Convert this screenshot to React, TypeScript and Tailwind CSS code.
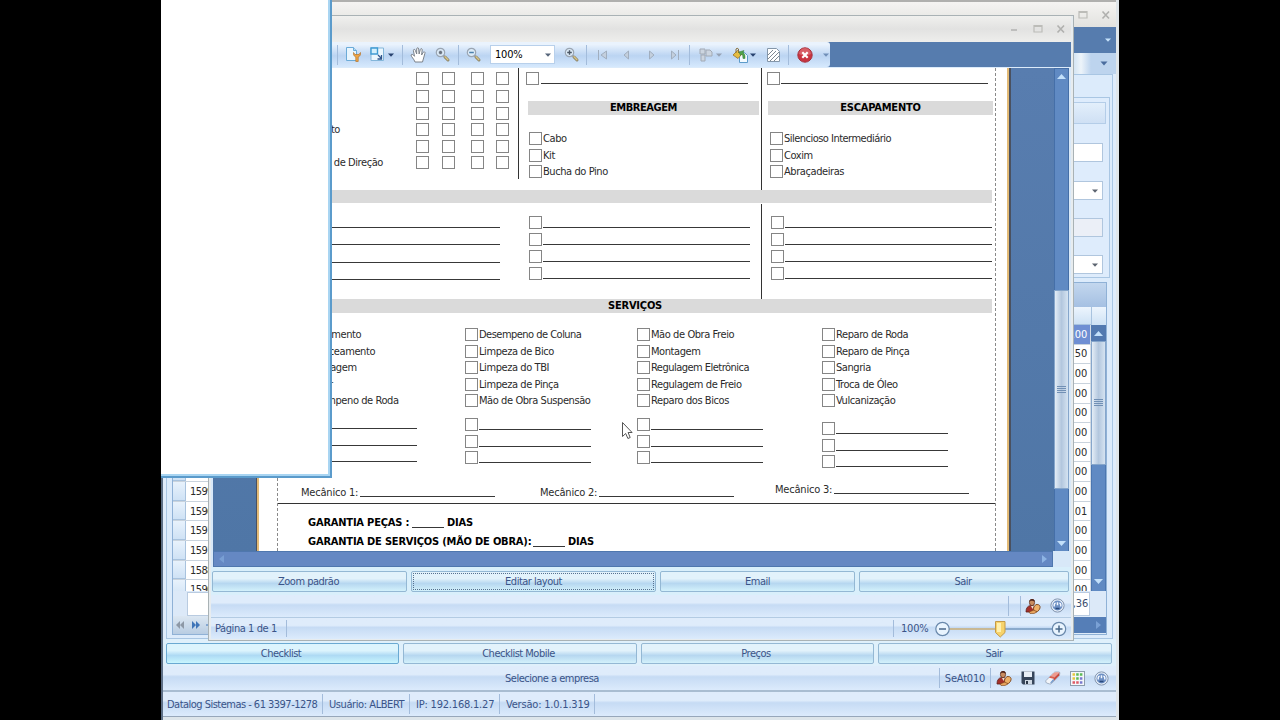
import React from "react";

const Box = ({ className = "" }: { className?: string }) => (
  <span className={`block h-[13px] w-[13px] shrink-0 border border-[#858585] bg-white ${className}`} />
);

const Line = ({ className = "" }: { className?: string }) => (
  <span className={`block h-px shrink-0 bg-[#383838] ${className}`} />
);

const Item = ({ label, className = "" }: { label: string; className?: string }) => (
  <div className={`flex h-[13px] items-center whitespace-nowrap ${className}`}>
    <Box />
    <span className={`pl-px ${label.length > 18 && !label.startsWith("Mão") ? "tracking-[-0.52px]" : "tracking-[-0.42px]"}`}>{label}</span>
  </div>
);

const Blank = ({ className = "", line = "w-[112px]", gap = "gap-px" }: { className?: string; line?: string; gap?: string }) => (
  <div className={`flex h-[13px] items-end ${gap} ${className}`}>
    <Box />
    <Line className={`${line} mb-px`} />
  </div>
);

const Caret = ({ className = "fill-[#2f4f80]" }: { className?: string }) => (
  <svg width="6" height="4" viewBox="0 0 6 4" className={`shrink-0 ${className}`}><path d="M0 .5h6L3 3.8z" /></svg>
);

const PersonIcon = () => (
  <svg width="16" height="16" viewBox="0 0 16 16" className="shrink-0">
    <path d="M1 14c0-4 1.500-6 4.500-6.500L9 8l2 6z" fill="#a5302a" stroke="#5e201b" strokeWidth=".8" />
    <ellipse cx="7" cy="4.500" rx="2.600" ry="3.200" fill="#c98c5f" stroke="#54281a" strokeWidth=".7" />
    <path d="M4.300 4C4 .5 10-.5 9.800 4 8.500 2 6 3 5.500 2.500z" fill="#4d2218" />
    <path d="M6 8l1.500 3L9 8z" fill="#eee0d2" />
    <ellipse cx="11.800" cy="10" rx="3" ry="3.700" transform="rotate(25 11.800 10)" fill="#edb067" stroke="#7c431a" strokeWidth=".8" />
    <path d="M4 14l5-2 3 2-3 1.500H5z" fill="#e6a35e" stroke="#7c431a" strokeWidth=".6" />
  </svg>
);

const HelpIcon = () => (
  <svg width="15" height="15" viewBox="0 0 15 15" className="shrink-0">
    <circle cx="7.500" cy="7.500" r="6.600" fill="#e9f1fa" stroke="#8193ad" />
    <circle cx="7.500" cy="7.500" r="5" fill="#6d8fc3" />
    <path d="M4.200 8.500V6.800q0-1.500 1.500-1.500M10.800 8.500V6.800q0-1.500-1.500-1.500M7.500 4.200v3" stroke="#f4f8ff" strokeWidth="1.500" fill="none" />
    <path d="M5.500 10.500h4" stroke="#294a7d" strokeWidth="1.500" />
  </svg>
);

const Magnifier = ({ sign }: { sign: "plus" | "minus" | "dot" }) => (
  <svg width="16" height="16" viewBox="0 0 16 16" className="shrink-0">
    <path d="M8.500 8.500l2 2" stroke="#7e8793" strokeWidth="1.500" />
    <path d="M10 10l3 3" stroke="#8c8468" strokeWidth="3" strokeLinecap="round" />
    <path d="M10 9.800l2.900 2.900" stroke="#d6c487" strokeWidth="1.400" strokeLinecap="round" />
    <circle cx="5.500" cy="5.500" r="4.200" fill="#dcebf8" stroke="#9aa5b2" strokeWidth="1.200" />
    {sign === "plus" && <path d="M5.500 3.200v4.600M3.200 5.500h4.600" stroke="#4b5765" strokeWidth="1.400" />}
    {sign === "minus" && <path d="M3.200 5.500h4.600" stroke="#4b80ad" strokeWidth="1.500" />}
    {sign === "dot" && <path d="M5.500 3.800v3.400M3.800 5.500h3.400" stroke="#69727e" strokeWidth="2" />}
  </svg>
);

const WindowButtons = ({ className = "" }: { className?: string }) => (
  <svg width="56" height="10" viewBox="0 0 56 10" className={className}>
    <path d="M1 6h6" stroke="#b2b2b0" strokeWidth="1.500" />
    <path d="M24 1.500h8v6.500h-8zM24 2.500h8" stroke="#bcbcb8" strokeWidth="1.200" fill="none" />
    <path d="M47.500 1.500l6.500 7M54 1.500l-6.500 7" stroke="#b0b0ae" strokeWidth="1.600" />
  </svg>
);

const Sep = ({ className = "h-[20px]" }: { className?: string }) => (
  <span className={`block w-px shrink-0 bg-[#a3bcdb] ${className}`} />
);

const Btn = ({ label, className = "", focus = false, hot = false }: { label: string; className?: string; focus?: boolean; hot?: boolean }) => (
  <button
    className={`flex h-[21px] shrink-0 items-center justify-center rounded-[2px] border bg-linear-to-b tracking-[-0.5px] text-[#3a5488] ${
      hot
        ? "border-[#6aa9d2] from-[#dcf4fd] from-35% via-[#aedaf4] via-60% to-[#c8f6fe]"
        : "border-[#94b8d4] from-[#e2f2fb] from-35% via-[#b6d7f0] via-60% to-[#d3f1fb]"
    } ${className}`}
  >
    {focus ? (
      <span className="mx-px flex h-[17px] w-full items-center justify-center border border-dotted border-[#56708f]">{label}</span>
    ) : (
      label
    )}
  </button>
);

const BAR = "bg-linear-to-b from-[#dfecfb] from-35% via-[#c6dbf4] via-45% to-[#dcebfc]";

const Grip = () => (
  <svg width="9" height="8" viewBox="0 0 9 8"><path d="M0 .5h9M0 2.500h9M0 4.500h9M0 6.500h9" stroke="#7190b5" /></svg>
);

const Up = () => <svg width="9" height="5" viewBox="0 0 9 5"><path d="M0 5l4.500-5L9 5z" fill="#c3e0fa" /></svg>;
const Down = () => <svg width="9" height="5" viewBox="0 0 9 5"><path d="M0 0h9L4.500 5z" fill="#c3e0fa" /></svg>;

const gridRows = [
  ["1612", ".00"], ["1611", ".50"], ["1610", ".00"], ["1607", ".00"], ["1605", ".00"], ["1604", ".00"], ["1602", ".00"],
  ["1600", ".00"], ["1599", ".00"], ["1596", ".01"], ["1591", ".00"], ["1591", ".00"], ["1588", ".00"], ["1590", ".00"],
];

function Field({ className = "", arrow = false, off = false }: { className?: string; arrow?: boolean; off?: boolean }) {
  return (
    <div className={`flex h-[19px] w-[180px] shrink-0 items-center justify-end self-end border border-[#b0c6de] pr-[4px] ${off ? "bg-[#ebeff7]" : "bg-white"} ${className}`}>
      {arrow && <Caret className="fill-[#5c6470]" />}
    </div>
  );
}

function AppWindow() {
  return (
    <div className="flex h-full flex-col border-r-[3px] border-l-2 border-r-[#dfe5e9] border-l-[#5d6f86] bg-[#dfecfb]">
      <header className="flex h-[27px] shrink-0 items-center justify-end border-t-2 border-[#b0b0ae] bg-linear-to-b from-[#f5f4f2] to-[#e2e2df] pr-[5px]">
        <WindowButtons />
      </header>
      <div className="flex h-[26px] shrink-0 items-center justify-end bg-[#567cae] pr-[5px]"><Caret className="fill-[#c7e3fb]" /></div>
      <div className="flex h-[21px] shrink-0 justify-end bg-[#bcd3ed]">
        <div className="w-[20px] bg-linear-to-r from-[#cadef0] via-[#edf4fa] to-[#bdd4ee]" />
        <div className="flex w-[25px] items-center justify-center bg-[#bdd4ee]">
          <svg width="8" height="5" viewBox="0 0 8 5"><path d="M.5.5h7L4 4.500z" fill="#4a6c9e" /></svg>
        </div>
      </div>
      <main className="mr-[3px] ml-[3px] flex h-[565px] shrink-0 flex-col border border-[#a9c6e3] bg-[#dcebfb] px-[5px] pt-[22px]">
        <section className="-mr-[3px] flex h-[181px] shrink-0 flex-col border border-[#a9c6e3] bg-[#deecfc] p-[4px] pr-[6px]">
          <div className="-mr-[3px] h-[22px] shrink-0 border border-[#b4cde8] bg-linear-to-b from-[#e3effb] to-[#cfe0f4]" />
          <Field className="mt-[19px]" />
          <Field className="mt-[19px]" arrow />
          <Field className="mt-[18px]" off />
          <Field className="mt-[18px]" arrow />
        </section>
        <section className="mt-[4px] flex h-[353px] shrink-0 flex-col border border-[#8fb1d6] bg-[#dce9f8]">
          <div className="h-[24px] shrink-0 bg-linear-to-b from-[#c3d7ee] to-[#a5c0e2]" />
          <div className="flex h-[284px] shrink-0">
            <div className="flex min-w-0 flex-1 flex-col overflow-hidden">
              <div className="h-[18px] shrink-0 border-b border-[#a8c3df] bg-linear-to-b from-[#edf5fd] to-[#cee2f5]" />
              {gridRows.map(([id, value], i) => (
                <div key={i} className="flex h-[19.65px] shrink-0 border-b border-[#c9d3dd] bg-white">
                  <span className="w-[13px] border-r border-b border-[#a9c3de] bg-linear-to-b from-[#e8f2fc] to-[#cfe2f5]" />
                  <span className="flex flex-1 items-center pl-[4px] tracking-[-0.6px]">{id}</span>
                  <span className={`flex w-[50px] items-center justify-end border-r border-[#d4dde6] pr-[3px] ${i === 0 ? "bg-[#6f8fd3] text-white" : ""}`}>{value}</span>
                </div>
              ))}
            </div>
            <div className="flex w-[15px] shrink-0 flex-col bg-[#608ac3]">
              <div className="h-[18px] shrink-0 border-l border-[#a8c3df] bg-linear-to-b from-[#edf5fd] to-[#cee2f5]" />
              <div className="flex h-[16px] items-center justify-center bg-[#5279b0]"><Up /></div>
              <div className="flex h-[124px] items-center justify-center border border-[#86a6cb] bg-linear-to-r from-[#e4edf6] via-[#b3c7de] to-[#d5e3f1]"><Grip /></div>
              <div className="flex flex-1 items-end justify-center border-x border-[#4c77b1] pb-[7px]"><Down /></div>
            </div>
          </div>
          <div className="flex h-[25px] shrink-0 items-center justify-end pr-[16px] pl-[14px]">
            <span className="flex h-[24px] w-full items-center justify-end border border-[#b9cbe0] bg-white pr-px text-[#394c6d]">,36</span>
          </div>
          <div className="flex flex-1 items-center bg-[#deebf9]">
            <div className="flex h-full w-[200px] items-center gap-[5px] bg-linear-to-b from-[#dce7f2] to-[#b8cce2] pl-[3px]">
              <svg width="34" height="8" viewBox="0 0 34 8">
                <path d="M4 0v8L0 4zM8 0v8L4 4z" fill="#8d98a6" />
                <path d="M16 0v8l4-4zM20 0v8l4-4z" fill="#3f75b8" />
                <path d="M30 4h4" stroke="#3f75b8" />
              </svg>
            </div>
            <div className="flex h-[16px] flex-1 items-center justify-end bg-[#557eb7] pr-[5px]">
              <svg width="5" height="8" viewBox="0 0 5 8"><path d="M0 0l5 4-5 4z" fill="#7aa1d5" /></svg>
            </div>
          </div>
        </section>
      </main>
      <div className="flex h-[27px] shrink-0 gap-[4px] bg-[#dff0fb] pt-[4px] pl-[3px]">
        <Btn label="Checklist" hot className="w-[233px] pr-[3px]" />
        <Btn label="Checklist Mobile" className="w-[234px] pr-[3px]" />
        <Btn label="Preços" className="w-[233px] pr-[3px]" />
        <Btn label="Sair" className="w-[234px] pr-[2px]" />
      </div>
      <div className={`flex h-[26px] shrink-0 items-center border-b-2 border-[#a9bdd1] text-[#3a5488] ${BAR}`}>
        <span className="w-[776px] pl-[2px] text-center tracking-[-0.5px]">Selecione a empresa</span>
        <Sep />
        <span className="w-[50px] text-center">SeAt010</span>
        <Sep />
        <div className="flex flex-1 items-center justify-between pr-[7px] pl-[5px]">
          <PersonIcon />
          <svg width="14" height="14" viewBox="0 0 14 14">
            <path d="M.5.5h13v13H2l-1.500-1.500z" fill="#36455a" />
            <path d="M3 .5h8V6H3z" fill="#e8eff7" /><path d="M4 9h7v4.500H4z" fill="#cfd9e4" /><path d="M5 10h2v3H5z" fill="#2a3748" />
          </svg>
          <svg width="16" height="14" viewBox="0 0 16 14">
            <path d="M1 9.500L8.500 2q1-1 2-1h3.500q1 0 .8 1.200l-.4 2.600-7.900 7.700q-.8.700-1.700.5L1.500 12q-1.200-1-.5-2.500z" fill="#f2f5fa" stroke="#8a99ad" strokeWidth=".7" />
            <path d="M5.800 4.700L8.800 2q1-.8 2-.7h3.400l-4 4.400z" fill="#ee9b8e" />
            <path d="M14.400 1.500l-.3 3.100-5 5-.7-2z" fill="#c8473b" />
            <path d="M5.500 5l4.700.7-1.500 2-4.700-1z" fill="#d9604f" />
            <path d="M8.400 7.800l.7 1.800-2.900 2.700q-.7.500-.9-.8z" fill="#6f97cb" />
          </svg>
          <svg width="15" height="15" viewBox="0 0 15 15">
            <rect x=".5" y=".5" width="14" height="14" fill="#f4f7fa" stroke="#8d9cac" />
            <path d="M2.500 3.500h2.500M2.500 7.500h2.500" stroke="#e6c83e" strokeWidth="2.500" />
            <path d="M6.200 3.500h2.500M6.200 7.500h2.500M9.900 3.500h2.500" stroke="#5bbb56" strokeWidth="2.500" />
            <path d="M9.900 7.500h2.500M9.900 11.500h2.500" stroke="#7a79cf" strokeWidth="2.500" />
            <path d="M2.500 11.500h2.500M6.200 11.500h2.500" stroke="#dd5b67" strokeWidth="2.500" />
          </svg>
          <HelpIcon />
        </div>
      </div>
      <footer className={`flex h-[25px] shrink-0 items-center border-b border-[#97a7ba] text-[#3a5488] ${BAR}`}>
        <span className="w-[159px] pl-[4px] tracking-[-0.52px] whitespace-nowrap">Datalog Sistemas - 61 3397-1278</span>
        <Sep />
        <span className="w-[86px] pl-[6px] tracking-[-0.42px] whitespace-nowrap">Usuário: ALBERT</span>
        <Sep />
        <span className="w-[89px] pl-[6px] whitespace-nowrap">IP: 192.168.1.27</span>
        <Sep />
        <span className="w-[94px] pl-[6px] whitespace-nowrap">Versão: 1.0.1.319</span>
        <Sep />
      </footer>
      <div className="flex-1 bg-[#dde5ea]" />
    </div>
  );
}

const checkRows = ["mt-[4px]", "mt-[5px]", "mt-[4px]", "mt-[3px]", "mt-[4px]", "mt-[3px]"];

const serviceColumns = [
  { pad: "w-[172px]", items: ["Desempeno de Coluna", "Limpeza de Bico", "Limpeza do TBI", "Limpeza de Pinça", "Mão de Obra Suspensão"], blank: "mt-[11px]" },
  { pad: "w-[185px]", items: ["Mão de Obra Freio", "Montagem", "Regulagem Eletrônica", "Regulagem de Freio", "Reparo dos Bicos"], blank: "mt-[11px]" },
  { pad: "w-[140px]", items: ["Reparo de Roda", "Reparo de Pinça", "Sangria", "Troca de Óleo", "Vulcanização"], blank: "mt-[15px]" },
];

const FourBlanks = () => (
  <>
    <Blank className="mt-[12px]" line="w-[207px]" />
    <Blank className="mt-[4px]" line="w-[207px]" />
    <Blank className="mt-[4px]" line="w-[207px]" />
    <Blank className="mt-[4px]" line="w-[207px]" />
  </>
);

function Report() {
  return (
    <div className="flex h-full w-[755px] shrink-0 border-r-2 border-l border-r-[#4a5160] border-l-[#4a5160]">
      <div className="flex w-full border-x-2 border-[#e3bb77] bg-white pr-[11px] pl-[18px]">
        <div className="flex w-full flex-col border-x border-dashed border-[#8a8a8a] text-[#2b2b2b]">
          <div className="flex h-[122px] shrink-0">
            <div className="flex w-[240px] shrink-0">
              <div className="flex w-[138px] flex-col pt-[55px] text-right tracking-[-0.42px] whitespace-nowrap">
                <span className="pr-[76px] leading-[14px]">Alinhamento</span>
                <span className="mt-[19px] pr-[33px] leading-[14px]">Caixa de Direção</span>
              </div>
              <div className="flex flex-col">
                {checkRows.map((m, i) => (
                  <div key={i} className={`flex ${m}`}>
                    <Box /><Box className="ml-[13px]" /><Box className="ml-[16px]" /><Box className="ml-[12px]" />
                  </div>
                ))}
              </div>
            </div>
            <div className="h-[111px] w-px shrink-0 bg-[#333]" />
            <div className="flex w-[242px] shrink-0 flex-col pl-[7px]">
              <Blank className="mt-[4px]" line="w-[207px]" gap="gap-[2px]" />
              <h3 className="mt-[16px] ml-[2px] flex h-[14px] w-[231px] items-center justify-center bg-[#dadada] pb-[2px] font-bold tracking-[-0.45px] text-black">EMBREAGEM</h3>
              <Item label="Cabo" className="mt-[17px] ml-[3px]" />
              <Item label="Kit" className="mt-[4px] ml-[3px]" />
              <Item label="Bucha do Pino" className="mt-[3px] ml-[3px]" />
            </div>
            <div className="w-px shrink-0 bg-[#333]" />
            <div className="flex flex-1 flex-col pl-[5px]">
              <Blank className="mt-[4px]" line="w-[207px]" gap="gap-px" />
              <h3 className="mt-[16px] ml-px flex h-[14px] w-[225px] items-center justify-center bg-[#dadada] pb-[2px] font-bold text-black">ESCAPAMENTO</h3>
              <Item label="Silencioso Intermediário" className="mt-[17px] ml-[3px]" />
              <Item label="Coxim" className="mt-[4px] ml-[3px]" />
              <Item label="Abraçadeiras" className="mt-[3px] ml-[3px]" />
            </div>
          </div>
          <div className="mr-[3px] h-[13px] shrink-0 bg-[#dadada]" />
          <div className="flex h-[96px] shrink-0 pt-px">
            <div className="flex w-[222px] shrink-0 flex-col">
              <Line className="mt-[23px]" /><Line className="mt-[16px]" /><Line className="mt-[17px]" /><Line className="mt-[16px]" />
            </div>
            <div className="flex w-[261px] shrink-0 flex-col pl-[29px]"><FourBlanks /></div>
            <div className="w-px shrink-0 bg-[#333]" />
            <div className="flex flex-1 flex-col pl-[9px]"><FourBlanks /></div>
          </div>
          <h3 className="mr-[3px] flex h-[14px] shrink-0 items-center justify-center bg-[#dadada] pb-[2px] font-bold text-black">SERVIÇOS</h3>
          <div className="flex h-[166px] shrink-0 pt-[15px]">
            <div className="flex w-[187px] shrink-0 flex-col">
              <div className="flex w-full flex-col gap-[3.500px] pl-[11px]">
                <Item label="Alinhamento" /><Item label="Balanceamento" /><Item label="Cambagem" /><Item label="Caster" /><Item label="Desempeno de Roda" />
              </div>
              <Line className="mt-[21px] w-[139px]" /><Line className="mt-[15.500px] w-[139px]" /><Line className="mt-[15.500px] w-[139px]" />
            </div>
            {serviceColumns.map((c) => (
              <div key={c.pad} className={`flex shrink-0 flex-col ${c.pad}`}>
                <div className="flex flex-col gap-[3.500px]">{c.items.map((t) => <Item key={t} label={t} />)}</div>
                <div className={`flex flex-col gap-[3.500px] ${c.blank}`}><Blank /><Blank /><Blank /></div>
              </div>
            ))}
          </div>
          <div className="flex h-[25px] shrink-0 border-b border-[#333] pl-[23px] leading-[14px]">
            <div className="flex w-[239px] items-end pb-[4px] whitespace-nowrap"><span className="-mb-px w-[59px]">Mecânico 1:</span><Line className="mb-[2px] w-[135px]" /></div>
            <div className="flex w-[235px] items-end pb-[4px] whitespace-nowrap"><span className="-mb-px w-[59px]">Mecânico 2:</span><Line className="mb-[2px] w-[135px]" /></div>
            <div className="flex items-end pb-[7px] whitespace-nowrap"><span className="-mb-px w-[59px]">Mecânico 3:</span><Line className="mb-[2px] w-[135px]" /></div>
          </div>
          <div className="flex flex-col gap-[5px] pt-[12px] pl-[30px] leading-[14px] font-bold text-black">
            <div className="flex items-end"><span className="w-[104px]">GARANTIA PEÇAS :</span><Line className="mb-[2px] w-[32px]" /><span className="ml-[3px]">DIAS</span></div>
            <div className="flex items-end whitespace-nowrap"><span className="w-[225px]">GARANTIA DE SERVIÇOS (MÃO DE OBRA):</span><Line className="mb-[2px] w-[32px]" /><span className="ml-[3px]">DIAS</span></div>
          </div>
        </div>
      </div>
    </div>
  );
}

function Toolbar() {
  return (
    <div className="flex h-[26px] shrink-0 border-b border-[#dcebfa] bg-[#567cae]">
      <div className="flex h-[25px] w-[619px] shrink-0 items-center rounded-r-[3px] bg-linear-to-b from-[#eaf3fd] from-10% via-[#bbd4f2] via-55% to-[#d6e9fd] pl-[126px]">
        <Sep />
        <svg width="17" height="17" viewBox="0 0 17 17" className="ml-[7px] shrink-0">
          <path d="M1.500 1.500h7l3 3v10h-10z" fill="#e8f5fe" stroke="#6babd8" /><path d="M8.500 1.500v3h3" fill="#b8dcf3" stroke="#6babd8" />
          <path d="M8.500 6.500q-.6 3.500 2.300 4.500v4.500h2.400V11q2.900-1 2.300-4.500L14 8.500h-4z" fill="#eea544" stroke="#b5762f" strokeWidth=".7" />
        </svg>
        <svg width="15" height="15" viewBox="0 0 15 15" className="ml-[8px] shrink-0">
          <path d="M1 1h12.500v12.500H1z" fill="#eaf6fd" stroke="#83b6da" /><path d="M1 1h6.500v6H1z" fill="#d3effc" stroke="#3f9bd2" strokeWidth="1.400" />
          <path d="M8 8l3 3M11.500 8v4h-4" stroke="#31568c" strokeWidth="1.300" fill="none" />
        </svg>
        <Caret className="ml-[3px] fill-[#27426f]" />
        <Sep className="ml-[8px] h-[20px]" />
        <svg width="17" height="16" viewBox="0 0 17 16" className="ml-[7px] shrink-0">
          <path d="M5 15C4 12 1 9.500 1 8c1-1.500 2.500 0 3.500 1.300L3.400 3.500c0-1.500 1.600-1.500 2 0L6.700 7V2c0-1.600 2-1.600 2 0l.4 5 1.200-4.500c.5-1.400 2.100-1 1.900.5L11.600 8l1.600-2.600c.8-1.200 2.300-.4 1.700 1L12.500 15z" fill="#fff" stroke="#7c828a" />
        </svg>
        <div className="ml-[8px]"><Magnifier sign="dot" /></div>
        <Sep className="ml-[7px] h-[20px]" />
        <div className="ml-[7px]"><Magnifier sign="minus" /></div>
        <div className="ml-[8px] flex h-[19px] w-[65px] shrink-0 items-center justify-between border border-[#b8d0eb] bg-white pr-[3px] pl-[4px] text-black">100%<Caret className="fill-[#56657a]" /></div>
        <div className="ml-[9px]"><Magnifier sign="plus" /></div>
        <Sep className="ml-[6px] h-[20px]" />
        <svg width="84" height="10" viewBox="0 0 84 10" className="ml-[9px] shrink-0" fill="#c3cfdd" stroke="#a1aebe" strokeWidth="1">
          <path d="M2.500 0v10M10.500 1v8L5 5zM32.500 1v8L28 5zM53.500 1v8L58 5zM75.500 1v8L80 5zM82.500 0v10" />
        </svg>
        <Sep className="ml-[9px] h-[20px]" />
        <svg width="14" height="14" viewBox="0 0 14 14" className="ml-[9px] shrink-0" fill="#ccd5e0" stroke="#a2aab5">
          <path d="M1 1h5v5H1zM7 2h4l2 2v4H7zM2 7h4v6H2z" />
        </svg>
        <Caret className="ml-[3px] fill-[#95a2b4]" />
        <svg width="17" height="16" viewBox="0 0 17 16" className="ml-[10px] shrink-0">
          <path d="M7.500 5.500h5l3 3v7h-8z" fill="#f3faff" stroke="#5c9bca" />
          <path d="M1 8l4.500-4.500L10 7l-4 4.500z" fill="#e6bd42" stroke="#99712a" strokeWidth=".8" /><path d="M4 6V2q1-1.500 2.500 0v4" fill="none" stroke="#88703c" />
          <path d="M7 5l5-1.500-.8 2q2.300 1.500 1.800 6h-2q.2-3.500-1.500-4.500l-1 1.500z" fill="#50a34a" stroke="#34763a" strokeWidth=".5" />
        </svg>
        <Caret className="ml-px fill-[#27426f]" />
        <svg width="13" height="14" viewBox="0 0 13 14" className="ml-[11px] shrink-0">
          <path d="M.5.5h9l3 3v10H.5z" fill="#fff" stroke="#8496a9" /><path d="M1 7l5-5M1 11l8-8M3 13l9-9M7 13l5-5" stroke="#7d8792" />
        </svg>
        <Sep className="ml-[8px] h-[20px]" />
        <svg width="16" height="16" viewBox="0 0 16 16" className="ml-[8px] shrink-0">
          <circle cx="8" cy="8" r="7.200" fill="#c83440" stroke="#a6333f" /><path d="M2 7a6 6 0 0 1 12 0q-6 3-12 0z" fill="#e37b80" opacity=".6" />
          <path d="M5.300 5.300l5.400 5.400M10.700 5.300l-5.400 5.400" stroke="#fff" strokeWidth="2.200" />
        </svg>
        <Caret className="ml-[10px] fill-[#708fb8]" />
      </div>
    </div>
  );
}

function PreviewWindow() {
  return (
    <div className="flex h-full flex-col border border-[#a9b2b5] bg-[#e7ecef] pr-[2px] pl-[2px]">
      <header className="flex h-[26px] shrink-0 items-center justify-end bg-linear-to-b from-[#f0f0ee] via-[#e2e2e1] to-[#eeeeec] pr-[5px]"><WindowButtons /></header>
      <Toolbar />
      <div className="flex h-[483px] shrink-0 border-x-2 border-[#d8e8f8] bg-[#5078aa]">
        <div className="flex min-w-0 flex-1 overflow-hidden bg-linear-to-b from-[#587daf] to-[#4f76a6] pl-[43px]"><Report /></div>
        <div className="flex w-[15px] shrink-0 flex-col bg-[#608ac3]">
          <div className="flex h-[222px] shrink-0 justify-center border-x border-t border-[#456fa8] pt-[5px]"><Up /></div>
          <div className="flex h-[199px] shrink-0 items-center justify-center border border-[#86a6cb] bg-linear-to-r from-[#e4edf6] via-[#b3c7de] to-[#d5e3f1]"><Grip /></div>
          <div className="flex flex-1 items-end justify-center border-x border-[#456fa8] pb-[5px]"><Down /></div>
        </div>
      </div>
      <div className="flex h-[16px] shrink-0 bg-[#d8e8f8] pl-[2px]">
        <div className="flex w-[840px] items-center justify-between border border-[#4f77ae] bg-[#6588c3] px-[5px]">
          <svg width="5" height="8" viewBox="0 0 5 8"><path d="M5 0L0 4l5 4z" fill="#799fd4" /></svg>
          <svg width="5" height="8" viewBox="0 0 5 8"><path d="M0 0l5 4-5 4z" fill="#8eb4e4" /></svg>
        </div>
      </div>
      <div className="flex h-[28px] shrink-0 gap-[4px] bg-[#d9effb] pt-[4px] pl-px">
        <Btn label="Zoom padrão" className="w-[195px] pr-[2px]" />
        <Btn label="Editar layout" className="w-[245px]" focus />
        <Btn label="Email" className="w-[195px]" />
        <Btn label="Sair" className="w-[210px] pr-[2px]" />
      </div>
      <div className={`flex h-[23px] shrink-0 items-center justify-end border-b border-[#b3cbe3] pr-[6px] ${BAR}`}>
        <Sep /><Sep className="ml-[11px] h-[20px]" />
        <span className="ml-[4px] flex gap-[9px]"><PersonIcon /><HelpIcon /></span>
      </div>
      <div className={`flex h-[21px] shrink-0 items-center text-[#3a5488] ${BAR}`}>
        <span className="w-[75px] pl-[4px] tracking-[-0.42px] whitespace-nowrap">Página 1 de 1</span>
        <Sep className="h-[17px]" />
        <div className="flex flex-1 items-center justify-end pr-[3px]">
          <Sep className="h-[17px]" />
          <span className="ml-[7px] w-[33px]">100%</span>
          <svg width="134" height="18" viewBox="0 0 134 18">
            <path d="M15 9h52" stroke="#c9ac74" strokeWidth="1.500" /><path d="M67 9h52" stroke="#7698be" strokeWidth="1.500" />
            <circle cx="8.500" cy="9" r="6.700" fill="#e9f4fe" stroke="#6988ab" strokeWidth="1.200" /><path d="M5 9h7" stroke="#486789" strokeWidth="1.500" />
            <circle cx="125" cy="9" r="6.700" fill="#e9f4fe" stroke="#6988ab" strokeWidth="1.200" /><path d="M121.500 9h7M125 5.500v7" stroke="#486789" strokeWidth="1.500" />
            <path d="M61.500 1.500h9.500v11l-4.700 4.500-4.800-4.500z" fill="#f7d36b" stroke="#c59a45" /><path d="M63 3h4v9h-4z" fill="#fff0ae" />
          </svg>
        </div>
      </div>
    </div>
  );
}

export default function App() {
  return (
    <div className="relative h-[720px] w-[1280px] overflow-hidden bg-black font-['DejaVu_Sans_Condensed','DejaVu_Sans',sans-serif] text-[11px] leading-none tracking-[-0.2px] text-[#2b2b2b] [font-stretch:condensed]">
      <div className="absolute top-0 left-[161px] h-[720px] w-[958px]"><AppWindow /></div>
      <div className="absolute top-[15px] left-[208px] h-[626px] w-[866px]"><PreviewWindow /></div>
      <div className="absolute top-0 left-[161px] h-[478px] w-[171px] border-r-2 border-b-2 border-[#5b9bcb] bg-white">
        <div className="h-full w-full border-r-2 border-b-2 border-[#a9d5f2]" />
      </div>
      <svg width="12" height="20" viewBox="0 0 12 20" className="absolute top-[421px] left-[621px]">
        <path d="M1.500 1.500v14l3.200-3 2.200 5 2.300-1-2.100-5h4z" fill="#fff" stroke="#555" />
      </svg>
    </div>
  );
}
